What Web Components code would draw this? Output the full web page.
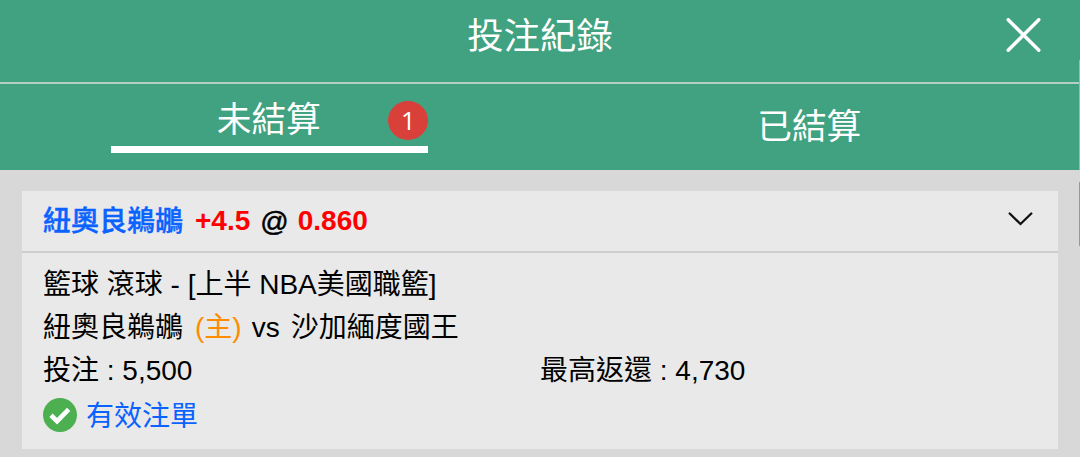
<!DOCTYPE html>
<html lang="zh-Hant">
<head>
<meta charset="utf-8">
<title>投注紀錄</title>
<style>
  body {
    margin: 0;
    height: 457px;
    overflow: hidden;
    background: #d8d8d8;
    font-family: "Liberation Sans", "Noto Sans CJK TC", sans-serif;
  }
</style>
</head>
<body>
<bet-history>
  <history-header>投注紀錄</history-header>
  <history-tabs>
    <history-tab active count="1">未結算</history-tab>
    <history-tab>已結算</history-tab>
  </history-tabs>
  <bet-card handicap="+4.5" odds="0.860">
    <span slot="pick">紐奧良鵜鶘</span>
    <bet-line>籃球 滾球 - [上半 NBA美國職籃]</bet-line>
    <bet-match home="紐奧良鵜鶘" away="沙加緬度國王"></bet-match>
    <bet-amounts stake="5,500" payout="4,730"></bet-amounts>
    <bet-status>有效注單</bet-status>
  </bet-card>
</bet-history>

<script>
/**
 * base class, renders its markup into an open shadow root
 */
class BetElement extends HTMLElement {
  constructor() {
    super();
    this.attachShadow({ mode: 'open' });
  }

  connectedCallback() {
    this.shadowRoot.innerHTML = this.render();
  }
}

/**
 * the whole panel
 */
class BetHistory extends BetElement {
  render() {
    return `
      <style>
        :host {
          display: flex;
          flex-direction: column;
          position: relative;
          height: 457px;
        }
        /* sliver of the page behind the panel */
        .edge {
          position: absolute;
          right: 0;
          top: 60px;
          width: 1px;
          height: 186px;
          background: linear-gradient(#8fc0aa 0 110px, #d8d8d8 110px 122px, #b98c7c 122px);
        }
      </style>
      <slot></slot>
      <div class="edge"></div>
    `;
  }
}

class HistoryHeader extends BetElement {
  render() {
    return `
      <style>
        :host {
          display: grid;
          grid-template-columns: 1fr auto 1fr;
          align-items: center;
          box-sizing: border-box;
          height: 84px;
          padding: 0 39px 12px;
          border-bottom: 2px solid #b3cfc2;
          background: #40a280;
          color: #fff;
          font-size: 36.4px;
          font-weight: 400;
        }
        .title {
          grid-column: 2;
          padding-top: 3px;
          line-height: 52px;
        }
        svg {
          justify-self: end;
          display: block;
        }
      </style>
      <span class="title"><slot></slot></span>
      <svg width="35" height="35" viewBox="0 0 35 35" fill="none" stroke="#fff" stroke-width="3.4" stroke-linecap="round">
        <path d="M2.2 1.7 32.8 32.3M32.8 1.7 2.2 32.3"/>
      </svg>
    `;
  }
}

class HistoryTabs extends BetElement {
  render() {
    return `
      <style>
        :host {
          display: grid;
          grid-template-columns: 1fr 1fr;
          box-sizing: border-box;
          height: 86px;
          padding-right: 1px;
          background: #40a280;
          color: #fff;
        }
      </style>
      <slot></slot>
    `;
  }
}

class HistoryTab extends BetElement {
  render() {
    const count = this.getAttribute('count');

    return `
      <style>
        :host {
          display: flex;
          justify-content: center;
          align-items: center;
          font-size: 34.7px;
          font-weight: 400;
        }
        :host([active]) {
          align-items: flex-start;
        }
        .label {
          position: relative;
          box-sizing: border-box;
          width: 317px;
          line-height: 50px;
          text-align: center;
        }
        :host([active]) .label {
          height: 69px;
          padding: 11px 2px 0 0;
          border-bottom: 7px solid #fff;
        }
        .badge {
          position: absolute;
          right: 0;
          top: 17px;
          width: 40px;
          height: 39px;
          border-radius: 50%;
          background: #da403a;
          font-family: "Open Sans", sans-serif;
          font-size: 25.5px;
          font-weight: 400;
          line-height: 39px;
        }
      </style>
      <div class="label">
        <slot></slot>
        ${count ? `<span class="badge">${count}</span>` : ''}
      </div>
    `;
  }
}

class BetCard extends BetElement {
  render() {
    return `
      <style>
        :host {
          display: block;
          box-sizing: border-box;
          height: 258px;
          margin: 21px 22px 0;
          background: #e9e9e9;
          color: #000;
          font-size: 28px;
        }
        header {
          display: flex;
          align-items: center;
          box-sizing: border-box;
          height: 62px;
          padding: 0 25px 2px 21px;
          border-bottom: 2px solid #cecece;
          font-weight: 700;
          line-height: 40px;
        }
        .pick {
          padding-top: 3px;
          color: #0a62ff;
          font-weight: 500;
          -webkit-text-stroke: 0.4px #0a62ff;
        }
        .red {
          padding-top: 1px;
          color: #f00;
        }
        .handicap {
          margin-left: 12px;
        }
        .at {
          margin: 0 9px 0 10px;
          padding-top: 3px;
          font-weight: 400;
          -webkit-text-stroke: 0.5px #000;
        }
        svg {
          margin: -2px 0 0 auto;
        }
        .body {
          display: flex;
          flex-direction: column;
          padding: 10px 21px 0;
        }
      </style>
      <header>
        <span class="pick"><slot name="pick"></slot></span>
        <span class="red handicap">${this.getAttribute('handicap')}</span>
        <span class="at">@</span>
        <span class="red">${this.getAttribute('odds')}</span>
        <svg width="25" height="14" viewBox="0 0 25 14" fill="none" stroke="#111" stroke-width="2.3" stroke-linecap="round">
          <path d="M1.7 1.5 12.5 12 23.3 1.5"/>
        </svg>
      </header>
      <div class="body"><slot></slot></div>
    `;
  }
}

class BetLine extends BetElement {
  render() {
    return `
      <style>
        :host {
          display: block;
          height: 43px;
          line-height: 43px;
          white-space: nowrap;
        }
      </style>
      <slot></slot>
    `;
  }
}

class BetMatch extends BetElement {
  render() {
    return `
      <style>
        :host {
          display: flex;
          height: 43px;
          line-height: 43px;
        }
        .home {
          margin: 0 10px 0 12px;
          color: #ff8c00;
        }
        .vs {
          margin-right: 11px;
        }
      </style>
      <span>${this.getAttribute('home')}</span>
      <span class="home">(主)</span>
      <span class="vs">vs</span>
      <span>${this.getAttribute('away')}</span>
    `;
  }
}

class BetAmounts extends BetElement {
  render() {
    return `
      <style>
        :host {
          display: grid;
          grid-template-columns: 1fr 1fr;
          height: 43px;
          line-height: 43px;
        }
      </style>
      <span>投注 : ${this.getAttribute('stake')}</span>
      <span>最高返還 : ${this.getAttribute('payout')}</span>
    `;
  }
}

class BetStatus extends BetElement {
  render() {
    return `
      <style>
        :host {
          display: flex;
          align-items: center;
          gap: 9px;
          height: 46px;
          color: #0a62ff;
        }
        .text {
          padding-bottom: 2px;
        }
      </style>
      <svg width="34" height="34" viewBox="0 0 35 35">
        <circle cx="17.5" cy="17.5" r="17.5" fill="#4caf50"/>
        <path d="M8.2 17.8 14.5 23.8 26.4 11.6" fill="none" stroke="#fff" stroke-width="4.8"/>
      </svg>
      <span class="text"><slot></slot></span>
    `;
  }
}

customElements.define('bet-history', BetHistory);
customElements.define('history-header', HistoryHeader);
customElements.define('history-tabs', HistoryTabs);
customElements.define('history-tab', HistoryTab);
customElements.define('bet-card', BetCard);
customElements.define('bet-line', BetLine);
customElements.define('bet-match', BetMatch);
customElements.define('bet-amounts', BetAmounts);
customElements.define('bet-status', BetStatus);
</script>
</body>
</html>
